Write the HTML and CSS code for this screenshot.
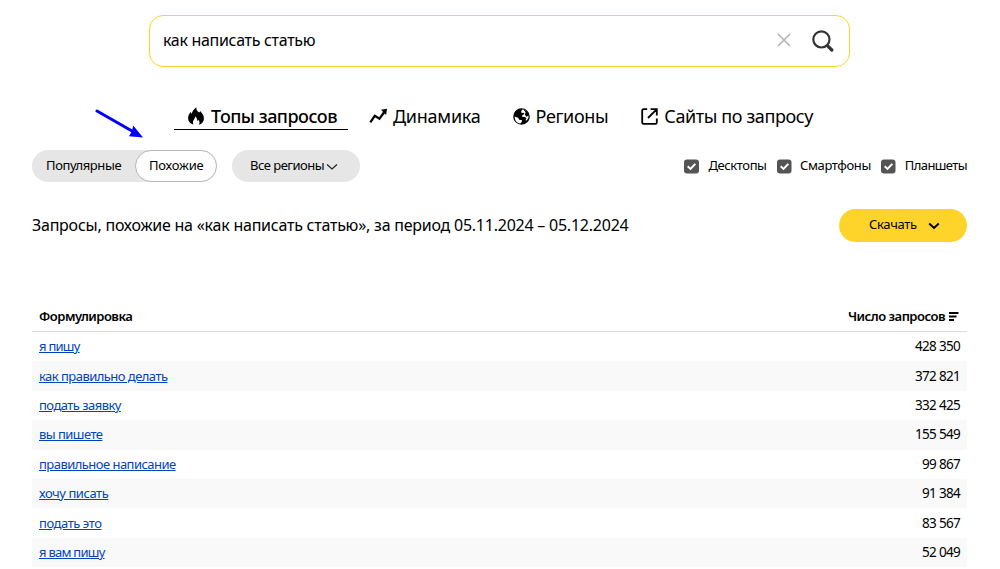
FILE: index.html
```html
<!DOCTYPE html>
<html lang="ru">
<head>
<meta charset="utf-8">
<title>Похожие запросы</title>
<link rel="stylesheet" href="styles.css">
</head>
<body>
<form class="search">
  <span class="search-text">как написать статью</span>
  <svg class="clear" width="14" height="14" viewBox="0 0 14 14"><path d="M1 1l12 12M13 1L1 13" stroke="#b3b3b3" stroke-width="1.6" fill="none"/></svg>
  <svg class="loupe" width="22" height="22" viewBox="0 0 22 22"><circle cx="9.4" cy="9.4" r="8.1" fill="none" stroke="#333" stroke-width="2.2"/><path d="M15.6 15.8l4.2 4.2" stroke="#333" stroke-width="3.2" stroke-linecap="round"/></svg>
</form>

<nav class="tabs">
  <a class="tab tab-active">
    <svg width="16" height="18" viewBox="0 0 16 18"><path d="M5.6 17.6C2.2 16.8.1 14.400 .1 11.200c0-2.700 1.200-4.500 2.600-6.400.2 1 .4 1.500 1 2C4.400 4.300 5.700 1.900 8.400.2c-.4 2.500.9 3.700 2.600 5.300.6-.3 1-.8 1.100-1.500 2.300 2.100 3.800 4.500 3.800 7.400 0 3-2 5.500-5 6.300 1-1.700.8-3.400-.5-5-.3.7-.6 1-1.200 1.300.2-2-.7-3.600-2.200-4.700.1 1.700-.5 2.500-1.300 3.700-.9 1.400-1 3-.1 4.600z"/></svg>
    <span>Топы запросов</span>
  </a>
  <a class="tab tab-dynamics">
    <svg width="19" height="16" viewBox="0 0 19 16"><path d="M1.300 14.300L5.800 7.800l4.700 2.900L15.300 4" fill="none" stroke="#000" stroke-width="2.200"/><path d="M12 1.700L18 .8l-.9 6.200z"/></svg>
    <span>Динамика</span>
  </a>
  <a class="tab tab-regions">
    <svg width="17" height="17" viewBox="0 0 17 17"><circle cx="8.500" cy="8.500" r="7.600" fill="#000" stroke="#000" stroke-width="1.400"/><path d="M1.600 8.600l3.500 1.100 1.100 2 2.900.6-.4 1.700-1.500 1.500C4 15.400 1.700 12.600 1.600 8.600zM9.200 1.600l-1 1.700.4 1.800 2-.3.900 1.300-2.200 1.200-.3 1.500 3 .2 1.500 1.500-1 1.600 1.200.3c1.300-1.300 2-2.700 1.900-4.600l-2.300-.9-.2-1.700 1.500-1.200C13.400 2.600 11.500 1.500 9.200 1.600z" fill="#fff"/><path d="M10.500 1.500c2.700.6 5 2.900 5.300 6.200l-2.600 1-1.300-2.300.7-2z"/></svg>
    <span>Регионы</span>
  </a>
  <a class="tab tab-sites">
    <svg width="17" height="17" viewBox="0 0 17 17"><path d="M6.200 1.200H2.600Q1.200 1.200 1.200 2.600v11.800q0 1.400 1.400 1.400h11.800q1.400 0 1.400-1.400V10.500M9.600 1.200h6.200V7.400M15.600 1.400L7 10" fill="none" stroke="#000" stroke-width="1.800"/></svg>
    <span>Сайты по запросу</span>
  </a>
</nav>

<svg class="arrow" width="52" height="34" viewBox="0 0 52 34"><path d="M2 2l35 20" stroke="#00f" stroke-width="3" stroke-linecap="round"/><path d="M48 28.500L34 27.300l3-5.200 1.200-5.600z" fill="#00f"/></svg>

<div class="controls">
  <div class="switch"><span class="switch-item">Популярные</span><span class="switch-item switch-on">Похожие</span></div>
  <div class="region"><span>Все регионы</span><svg width="12" height="8" viewBox="0 0 12 8"><path d="M1 1.500l5 4.500 5-4.500" fill="none" stroke="#222" stroke-width="1.200"/></svg></div>
  <div class="devices">
    <label class="device"><svg width="15" height="15" viewBox="0 0 15 15"><rect y=".5" width="15" height="14" rx="3" fill="#545454"/><path d="M3.700 7.200l2.800 2.700 4.800-5" fill="none" stroke="#fff" stroke-width="2"/></svg><span>Десктопы</span></label>
    <label class="device phones"><svg width="15" height="15" viewBox="0 0 15 15"><rect y=".5" width="14.500" height="14" rx="3" fill="#545454"/><path d="M3.700 7.200l2.800 2.700 4.800-5" fill="none" stroke="#fff" stroke-width="2"/></svg><span>Смартфоны</span></label>
    <label class="device tablets"><svg width="15" height="15" viewBox="0 0 15 15"><rect y=".5" width="14.500" height="14" rx="3" fill="#545454"/><path d="M3.700 7.200l2.800 2.700 4.800-5" fill="none" stroke="#fff" stroke-width="2"/></svg><span>Планшеты</span></label>
  </div>
</div>

<div class="heading">
  <h1>Запросы, похожие на «как написать статью», за период 05.11.2024 – 05.12.2024</h1>
  <div class="download"><span>Скачать</span><svg width="12" height="8" viewBox="0 0 12 8"><path d="M1.200 1.500L6 6l4.800-4.500" fill="none" stroke="#000" stroke-width="2"/></svg></div>
</div>

<div class="table">
  <div class="thead"><span>Формулировка</span><span class="sort"><span>Число запросов</span><svg width="10" height="9" viewBox="0 0 10 9"><path d="M0 1h9.500M0 4.500h7.500M0 8h5" stroke="#000" stroke-width="1.800"/></svg></span></div>
  <div class="row"><a class="tight">я пишу</a><span>428 350</span></div>
  <div class="row"><a>как правильно делать</a><span>372 821</span></div>
  <div class="row"><a>подать заявку</a><span>332 425</span></div>
  <div class="row"><a>вы пишете</a><span>155 549</span></div>
  <div class="row"><a>правильное написание</a><span>99 867</span></div>
  <div class="row"><a class="loose">хочу писать</a><span>91 384</span></div>
  <div class="row"><a class="loose">подать это</a><span>83 567</span></div>
  <div class="row"><a class="tight">я вам пишу</a><span>52 049</span></div>
</div>
</body>
</html>
```

FILE: styles.css
```css
* { box-sizing: border-box; }
body {
  margin: 0;
  padding: 15px 33px 0 32px;
  height: 569px;
  overflow: hidden;
  background: #fff;
  color: #000;
  font: 13px/20px "Noto Sans", sans-serif;
  letter-spacing: -0.4px;
}
svg { display: block; flex: none; }
.search {
  display: flex;
  align-items: center;
  width: 701px;
  height: 52px;
  margin-left: 117px;
  padding: 0 14px 0 13px;
  border: 1px solid #fed42b;
  border-radius: 14px;
}
.search-text { flex: 1; font-size: 16px; letter-spacing: -0.31px; padding-bottom: 2px; }
.clear { margin: 0 21px 2px 0; }
.loupe { margin-right: 1px; }
.tabs {
  display: flex;
  height: 28px;
  margin: 35px 0 0 142px;
  font-size: 18px;
  letter-spacing: -0.34px;
  white-space: nowrap;
}
.tab { display: flex; height: 28px; align-items: center; gap: 6px; }
.tab-active {
  width: 174px;
  gap: 7px;
  padding-left: 14px;
  border-bottom: 1px solid #000;
  font-weight: 500;
  letter-spacing: -0.5px;
}
.tab-dynamics { margin-left: 21px; gap: 5px; letter-spacing: -0.25px; }
.tab-regions { margin-left: 32px; }
.tab-sites { margin-left: 33px; letter-spacing: -0.4px; }
.arrow { position: absolute; left: 95px; top: 109px; }
.controls { display: flex; align-items: center; height: 32px; margin-top: 20px; }
.switch { display: flex; width: 185px; height: 32px; border-radius: 16px; background: #e6e6e6; }
.switch-item { width: 103px; height: 32px; padding-left: 14px; line-height: 31px; }
.switch-on {
  width: 82px;
  padding-left: 13px;
  border: 1px solid #b8b8b8;
  border-radius: 16px;
  background: #fff;
  line-height: 29px;
  letter-spacing: -0.2px;
}
.region {
  display: flex;
  align-items: center;
  width: 128px;
  height: 32px;
  margin-left: 15px;
  padding: 0 0 2px 18px;
  gap: 2px;
  border-radius: 16px;
  background: #e6e6e6;
}
.region span { letter-spacing: -0.5px; }
.region svg { margin-top: 3px; }
.devices { display: flex; flex: 1; justify-content: flex-end; gap: 10.5px; white-space: nowrap; }
.device { display: flex; align-items: center; gap: 9px; }
.device span { margin-top: -2px; }
.phones { gap: 8px; }
.tablets { gap: 8.5px; letter-spacing: -0.6px; }
.heading { display: flex; align-items: center; justify-content: space-between; height: 33px; margin-top: 27px; }
.heading h1 { margin: 0; padding-bottom: 2px; font-size: 16px; line-height: 20px; font-weight: 400; letter-spacing: -0.235px; white-space: nowrap; }
.download {
  display: flex;
  align-items: center;
  gap: 11px;
  width: 128px;
  height: 33px;
  padding: 0 0 3px 30px;
  border-radius: 17px;
  background: #fed42b;
  letter-spacing: -0.35px;
}
.download svg { margin-top: 4px; }
.table { margin-top: 60px; letter-spacing: -0.54px; }
.thead {
  display: flex;
  align-items: center;
  justify-content: space-between;
  height: 30px;
  padding: 0 8px 2px 7px;
  border-bottom: 1px solid #dcdcdc;
  font-weight: 600;
  letter-spacing: -0.5px;
}
.sort { display: flex; align-items: center; gap: 4px; }
.sort svg { margin-top: 1px; }
.row {
  display: flex;
  align-items: center;
  justify-content: space-between;
  height: 29.4px;
  padding: 0 7px 1px;
}
.row:nth-child(odd) { background: #f9f9f9; }
.row a { color: #04b; text-decoration: underline; }
.row .tight { letter-spacing: -0.75px; }
.row .loose { letter-spacing: -0.45px; }
.row span { font-size: 13.5px; letter-spacing: -0.75px; word-spacing: 0.4px; }
```
